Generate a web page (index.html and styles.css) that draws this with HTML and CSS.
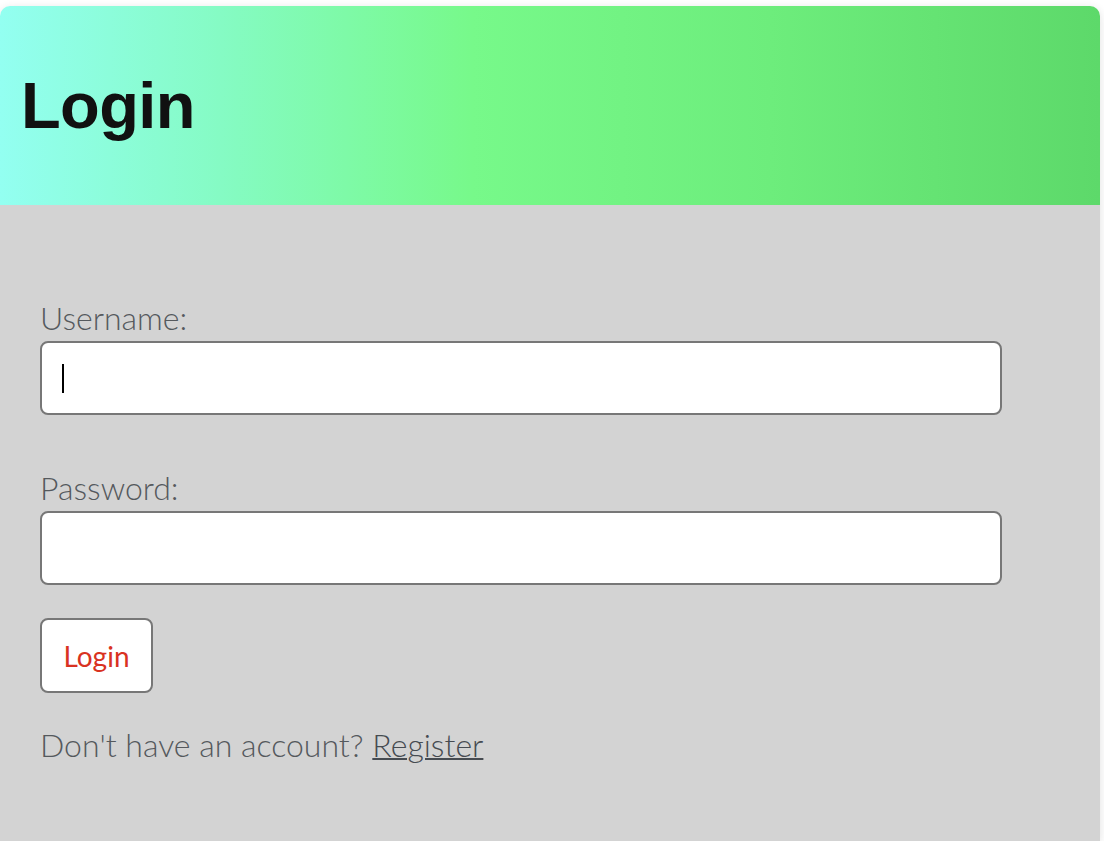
FILE: index.html
```html
<!DOCTYPE html>
<html>
<head>
<meta charset="utf-8">
<link rel="stylesheet" href="styles.css">
</head>
<body>
<div class="card">
  <header class="card-header">
    <h1 class="title">Login</h1>
  </header>
  <main class="card-body">
    <form class="form">
      <div class="field">
        <label class="label" for="u">Username:</label>
        <div class="input"><span class="caret"></span></div>
      </div>
      <div class="field">
        <label class="label" for="p">Password:</label>
        <div class="input"></div>
      </div>
      <button type="button" class="btn">Login</button>
      <p class="note">Don't have an account? <a class="link" href="#">Register</a></p>
    </form>
  </main>
</div>
</body>
</html>
```

FILE: styles.css
```css
html, body {
  margin: 0;
  padding: 0;
  background: #ffffff;
}
body {
  padding-top: 6px;
  font-family: "Lato", "Nunito", "Open Sans", sans-serif;
}
.card {
  width: 1100px;
  border-radius: 10px 10px 0 0;
  overflow: hidden;
  box-shadow: 0 2px 10px rgba(0, 0, 0, 0.12);
}
.card-header {
  height: 199px;
  display: flex;
  align-items: center;
  padding-left: 21px;
  background: linear-gradient(to right, #93fff1 0%, #85fbc4 20%, #77f98a 43%, #6ded7c 70%, #5dd96a 100%);
}
.title {
  margin: 0;
  font-family: "Liberation Sans", Arial, sans-serif;
  font-weight: 700;
  font-size: 65px;
  letter-spacing: -0.6px;
  color: #111111;
  line-height: 1;
}
.card-body {
  background: #d3d3d3;
  padding: 93px 40px 76px;
}
.form {
  width: 962px;
}
.field {
  display: flex;
  flex-direction: column;
  margin-bottom: 53px;
}
.field + .field {
  margin-bottom: 34px;
}
.label {
  font-size: 32px;
  font-weight: 300;
  color: #55595d;
  line-height: 40px;
  margin-bottom: 3px;
}
.input {
  box-sizing: border-box;
  height: 74px;
  background: #ffffff;
  border: 2px solid #777777;
  border-radius: 8px;
  display: flex;
  align-items: center;
  padding-left: 20px;
}
.caret {
  width: 2px;
  height: 29px;
  background: #000;
}
.btn {
  box-sizing: border-box;
  width: 113px;
  height: 75px;
  background: #ffffff;
  border: 2px solid #777777;
  border-radius: 8px;
  font-family: "Lato", "Nunito", sans-serif;
  font-size: 28px;
  color: #d93221;
  padding: 0;
  display: block;
  margin-top: -1px;
}
.note {
  margin: 32px 0 0;
  font-size: 32px;
  font-weight: 300;
  color: #55595d;
  line-height: 40px;
}
.link {
  color: #464b51;
  text-decoration: underline;
  text-decoration-thickness: 2px;
}
```
